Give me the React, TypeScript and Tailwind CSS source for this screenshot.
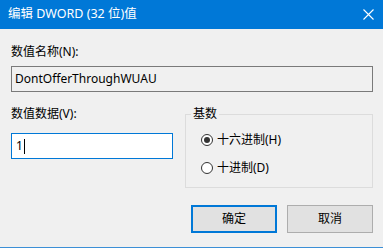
import React, { useState } from 'react';

const font = { fontFamily: '"Noto Sans", "Noto Sans CJK SC", sans-serif' };

const Radio: React.FC<{ checked: boolean; label: string; onClick: () => void }> = ({ checked, label, onClick }) => (
  <div className="flex items-center h-[16px] cursor-default" onClick={onClick}>
    <span className="w-[12px] h-[12px] rounded-full border border-[#333333] bg-white flex items-center justify-center">
      {checked && <span className="w-[6px] h-[6px] rounded-full bg-[#333333]" />}
    </span>
    <span className="ml-[4px] text-[12px] text-black leading-[16px]">{label}</span>
  </div>
);

const App: React.FC = () => {
  const [base, setBase] = useState<'hex' | 'dec'>('hex');

  return (
    <div className="w-[383px] h-[251px] bg-[#f0f0f0] flex flex-col overflow-hidden" style={font}>
      {/* title bar */}
      <div className="h-[29px] bg-[#0078d7] flex items-center justify-between pl-[8px] pr-[9px] shrink-0">
        <span className="text-white text-[12.5px] leading-none">编辑 DWORD (32 位)值</span>
        <svg width="11" height="11" viewBox="0 0 11 11">
          <path d="M0.5 0.5 L10.5 10.5 M10.5 0.5 L0.5 10.5" stroke="white" strokeWidth="1.1" />
        </svg>
      </div>

      <div className="flex-1 flex flex-col px-[11px] pr-[10px]">
        <div className="mt-[15px] h-[16px] text-[12px] leading-[16px] text-black">数值名称(N):</div>
        <div className="mt-[6px] h-[26px] border border-[#7a7a7a] bg-[#f0f0f0] flex items-center px-[3px] text-[12px] text-black">
          DontOfferThroughWUAU
        </div>

        <div className="flex mt-[14px]">
          <div className="w-[162px] flex flex-col">
            <div className="h-[16px] text-[12px] leading-[16px] text-black">数值数据(V):</div>
            <div className="mt-[11px] h-[26px] border border-[#0078d7] bg-white flex items-center px-[4px] text-[12px] text-black">
              1<span className="w-px h-[15px] bg-black ml-[1px]" />
            </div>
          </div>
          <div className="ml-[12px] flex-1 relative pt-[8px]">
            <div className="h-[74px] border border-[#dcdcdc] flex flex-col pl-[15px] pt-[17px] gap-[12px]">
              <Radio checked={base === 'hex'} label="十六进制(H)" onClick={() => setBase('hex')} />
              <Radio checked={base === 'dec'} label="十进制(D)" onClick={() => setBase('dec')} />
            </div>
            <span className="absolute top-0 left-[6px] px-[2px] bg-[#f0f0f0] text-[12px] leading-[16px] text-black">基数</span>
          </div>
        </div>

        <div className="flex justify-end gap-[10px] mt-[17px]">
          <button className="w-[86px] h-[28px] bg-[#e1e1e1] border-2 border-[#0078d7] text-[12px] text-black">确定</button>
          <button className="w-[86px] h-[28px] bg-[#e1e1e1] border border-[#adadad] text-[12px] text-black">取消</button>
        </div>
      </div>

      <div className="h-px bg-[#3c8fd6] shrink-0" />
      <div className="h-[3px] bg-white shrink-0" />
    </div>
  );
};

export default App;
